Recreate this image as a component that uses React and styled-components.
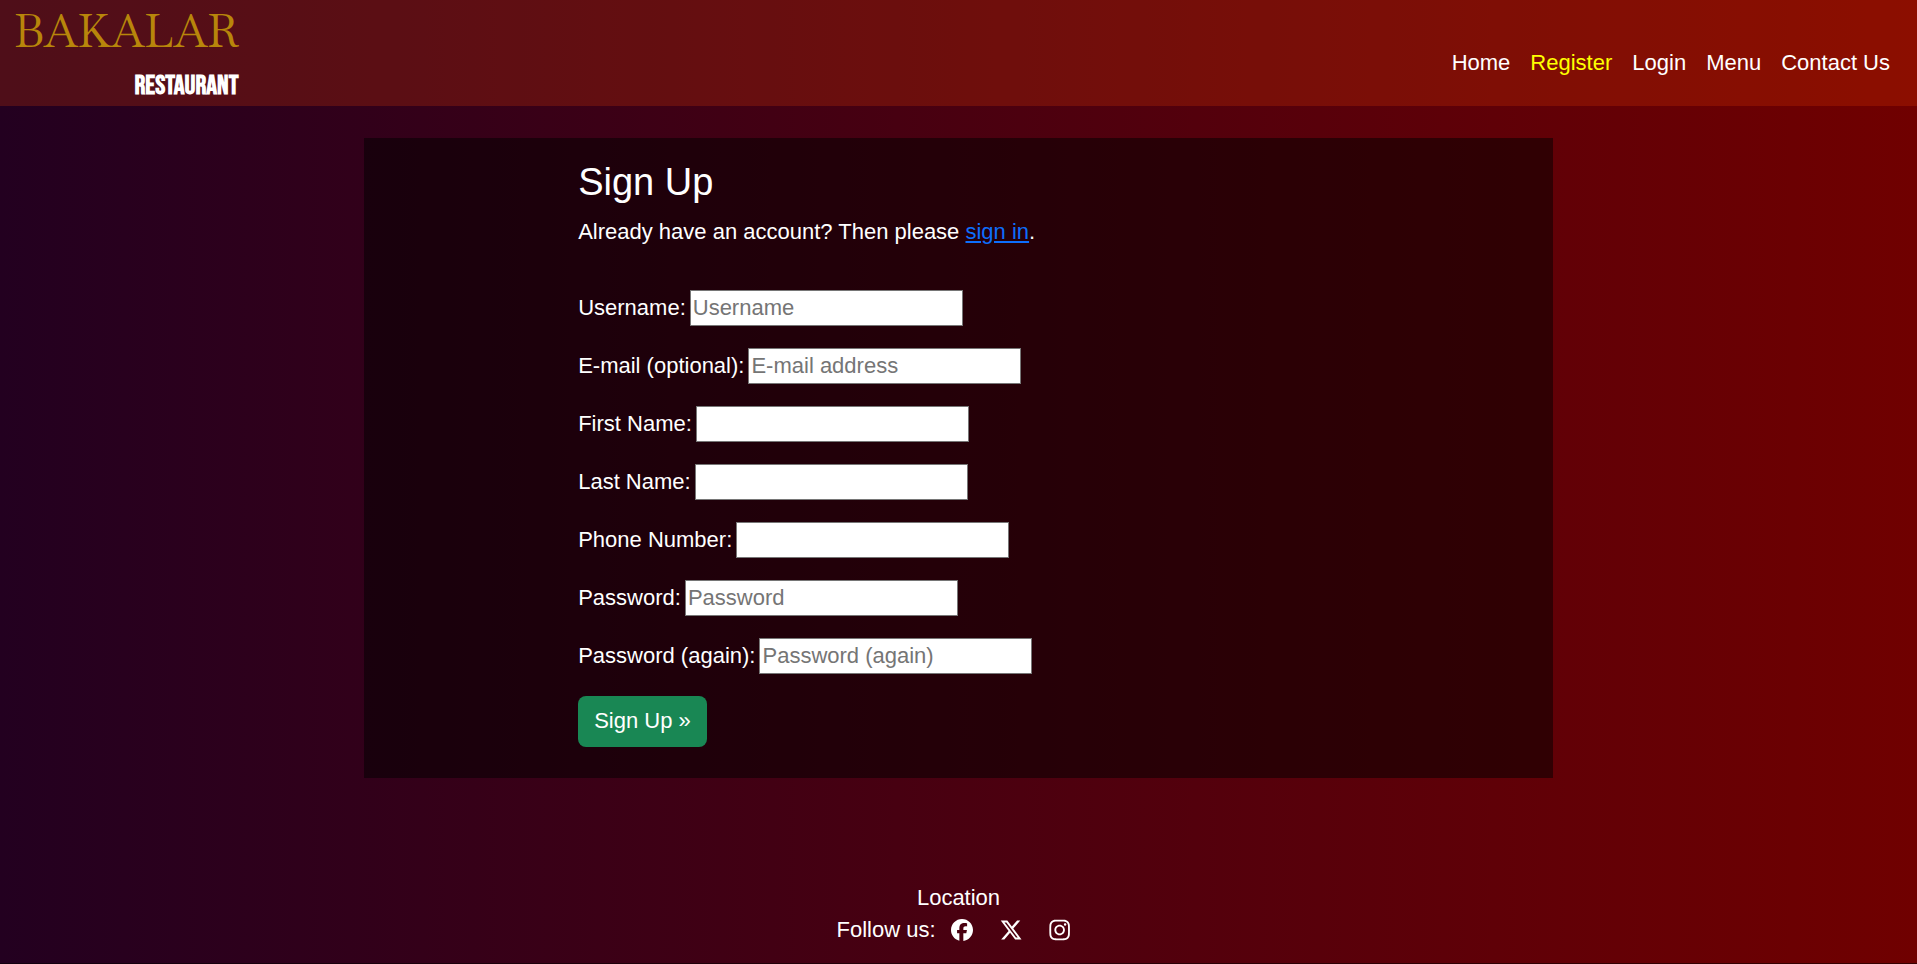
import React from 'react';
import styled, { createGlobalStyle } from 'styled-components';

const GlobalStyle = createGlobalStyle`
  *, *::before, *::after { box-sizing: border-box; }
  body {
    margin: 0;
    color: #fff;
    background: #230020;
    font: 22px/32px "Liberation Sans", Arial, sans-serif;
  }
`;

const Page = styled.div`
  min-height: 100vh;
  display: flex;
  flex-direction: column;
  background: linear-gradient(to right, #230020, #700000);
  border-bottom: 1px solid rgba(0, 0, 0, 0.5);
`;

const Header = styled.header`
  display: flex;
  justify-content: space-between;
  align-items: center;
  min-height: 106px;
  padding: 0 27px 0 14px;
  background: rgba(255, 69, 0, 0.2);
`;

const Brand = styled.a`
  display: flex;
  flex-direction: column;
  align-items: flex-end;
  gap: 4px;
  color: #fff;
  text-decoration: none;
`;

const BrandName = styled.span`
  color: #b8860b;
  font: 45px/62px "Baskervville", "Libre Baskerville", "Liberation Serif", serif;
`;

const BrandKind = styled.span`
  font: bold 27px/40px "Bebas Neue", "Liberation Sans", sans-serif;
`;

const Nav = styled.nav`
  display: flex;
  gap: 20px;
  padding-top: 20px;
`;

const NavLink = styled.a`
  color: ${(p) => (p.$active ? '#ff0' : '#fff')};
  text-decoration: none;
`;

const Panel = styled.main`
  width: 62%;
  margin: 32px auto 0;
  padding: 22px 0 31px;
  background: rgba(0, 0, 0, 0.5);
`;

const Content = styled.div`
  margin: 0 18%;
`;

const Title = styled.h1`
  margin: 0 0 12px;
  font-size: 38px;
  font-weight: 400;
  line-height: 44px;
`;

const Intro = styled.p`
  margin: 0 0 42px;
`;

const SignInLink = styled.a`
  color: #0d6efd;
`;

const Form = styled.form`
  display: flex;
  flex-direction: column;
  align-items: flex-start;
  gap: 22px;
`;

const Field = styled.div`
  display: flex;
  align-items: center;
  gap: 4px;
`;

const Input = styled.input`
  width: 273px;
  height: 36px;
  padding: 1px 2px;
  border: 1px solid #767676;
  background: #fff;
  font: inherit;

  &::placeholder { color: #757575; opacity: 1; }
`;

const Submit = styled.button`
  padding: 9px 16px 10px;
  border: 0;
  border-radius: 8px;
  color: #fff;
  background: #198754;
  font: inherit;
`;

const Footer = styled.footer`
  display: flex;
  flex-direction: column;
  align-items: center;
  margin-top: auto;
  padding: 40px 0 17px;
`;

const FooterLink = styled.a`
  color: #fff;
  text-decoration: none;
`;

const Social = styled.div`
  display: flex;
  align-items: center;
  gap: 27px;
  padding-right: 10px;
`;

const SocialLabel = styled.span`
  margin-right: -12px;
`;

const SocialLink = styled.a`
  display: flex;
  color: #fff;
`;

const Icon = styled.svg`
  width: 22px;
  height: 22px;
  fill: currentColor;
`;

const links = ['Home', 'Register', 'Login', 'Menu', 'Contact Us'];

const fields = [
  { id: 'username', label: 'Username:', placeholder: 'Username' },
  { id: 'email', label: 'E-mail (optional):', placeholder: 'E-mail address', type: 'email' },
  { id: 'first_name', label: 'First Name:' },
  { id: 'last_name', label: 'Last Name:' },
  { id: 'phone', label: 'Phone Number:' },
  { id: 'password1', label: 'Password:', placeholder: 'Password', type: 'password' },
  { id: 'password2', label: 'Password (again):', placeholder: 'Password (again)', type: 'password' },
];

const socials = [
  {
    name: 'Facebook',
    box: '0 0 512 512',
    path: 'M512 256C512 114.600 397.400 0 256 0S0 114.600 0 256C0 376 82.700 476.800 194.200 504.500V334.200H141.400V256h52.800V222.300c0-87.100 39.400-127.500 125-127.500c16.200 0 44.200 3.200 55.700 6.400V172c-6-.6-16.500-1-29.600-1c-42 0-58.200 15.900-58.200 57.200V256h83.600l-14.400 78.200H287V510.100C413.800 494.800 512 386.900 512 256z',
  },
  {
    name: 'X',
    box: '10 12 488 488',
    path: 'M389.200 48h70.600L305.600 224.200 487 464H345L233.700 318.600 106.500 464H35.800L200.700 275.500 26.800 48H172.400L272.900 180.900 389.200 48zM364.400 421.800h39.100L151.100 88h-42L364.400 421.800z',
  },
  {
    name: 'Instagram',
    box: '-8 16 480 480',
    path: 'M224.100 141c-63.600 0-114.900 51.300-114.900 114.900s51.300 114.900 114.900 114.900S339 319.500 339 255.900 287.700 141 224.100 141zm0 189.600c-41.100 0-74.700-33.500-74.700-74.700s33.500-74.700 74.700-74.700 74.700 33.500 74.700 74.700-33.600 74.700-74.700 74.700zm146.400-194.300c0 14.900-12 26.800-26.800 26.800-14.900 0-26.800-12-26.800-26.800s12-26.800 26.800-26.800 26.800 12 26.800 26.800zm76.100 27.200c-1.700-35.900-9.900-67.700-36.200-93.900-26.200-26.200-58-34.400-93.900-36.200-37-2.100-147.900-2.100-184.900 0-35.800 1.700-67.600 9.900-93.900 36.100s-34.400 58-36.200 93.900c-2.100 37-2.100 147.900 0 184.900 1.700 35.900 9.900 67.700 36.200 93.900s58 34.400 93.900 36.200c37 2.100 147.900 2.100 184.900 0 35.900-1.700 67.700-9.900 93.900-36.200 26.200-26.200 34.400-58 36.200-93.900 2.100-37 2.100-147.800 0-184.800zM398.800 388c-7.800 19.600-22.900 34.700-42.600 42.600-29.500 11.700-99.500 9-132.100 9s-102.700 2.600-132.100-9c-19.600-7.800-34.700-22.900-42.600-42.600-11.700-29.500-9-99.500-9-132.100s-2.600-102.700 9-132.100c7.800-19.600 22.900-34.700 42.600-42.600 29.500-11.700 99.500-9 132.100-9s102.700-2.600 132.100 9c19.600 7.800 34.700 22.900 42.600 42.600 11.700 29.500 9 99.500 9 132.100s2.700 102.700-9 132.100z',
  },
];

export default function App() {
  return (
    <>
      <GlobalStyle />
      <Page>
        <Header>
          <Brand href="#">
            <BrandName>BAKALAR</BrandName>
            <BrandKind>RESTAURANT</BrandKind>
          </Brand>
          <Nav>
            {links.map((name) => (
              <NavLink key={name} href="#" $active={name === 'Register'}>{name}</NavLink>
            ))}
          </Nav>
        </Header>
        <Panel>
          <Content>
            <Title>Sign Up</Title>
            <Intro>
              Already have an account? Then please <SignInLink href="#">sign in</SignInLink>.
            </Intro>
            <Form>
              {fields.map(({ id, label, placeholder, type = 'text' }) => (
                <Field key={id}>
                  <label htmlFor={id}>{label}</label>
                  <Input id={id} type={type} placeholder={placeholder} />
                </Field>
              ))}
              <Submit type="button">Sign Up »</Submit>
            </Form>
          </Content>
        </Panel>
        <Footer>
          <FooterLink href="#">Location</FooterLink>
          <Social>
            <SocialLabel>Follow us:</SocialLabel>
            {socials.map(({ name, box, path }) => (
              <SocialLink key={name} href="#" aria-label={name}>
                <Icon viewBox={box} aria-hidden="true"><path d={path} /></Icon>
              </SocialLink>
            ))}
          </Social>
        </Footer>
      </Page>
    </>
  );
}
